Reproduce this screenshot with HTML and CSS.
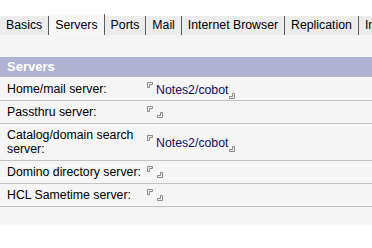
FILE: index.html
```html
<!DOCTYPE html>
<html>
<head>
<meta charset="utf-8">
<link rel="stylesheet" href="styles.css">
</head>
<body>
<div class="tabs">
  <div class="tab">Basics</div>
  <div class="tab tab-active">Servers</div>
  <div class="tab">Ports</div>
  <div class="tab">Mail</div>
  <div class="tab">Internet Browser</div>
  <div class="tab">Replication</div>
  <div class="tab">Internet Protocols</div>
</div>
<div class="panel">
  <div class="section-head">Servers</div>
  <div class="row">
    <div class="label">Home/mail server:</div>
    <div class="value"><span class="field"><svg class="mk mk-open" width="6" height="6" viewBox="0 0 6 6"><polygon points="0.5,5.5 0.5,0.5 5.5,0.5 5.5,2.5 2.5,2.5 2.5,5.5" /></svg><span class="val-text">Notes2/cobot</span><svg class="mk mk-close" width="6" height="6" viewBox="0 0 6 6"><polygon points="5.5,0.5 5.5,5.5 0.5,5.5 0.5,3.5 3.5,3.5 3.5,0.5" /></svg></span></div>
  </div>
  <div class="row">
    <div class="label">Passthru server:</div>
    <div class="value"><span class="field field-empty"><svg class="mk mk-open" width="6" height="6" viewBox="0 0 6 6"><polygon points="0.5,5.5 0.5,0.5 5.5,0.5 5.5,2.5 2.5,2.5 2.5,5.5" /></svg><svg class="mk mk-close" width="6" height="6" viewBox="0 0 6 6"><polygon points="5.5,0.5 5.5,5.5 0.5,5.5 0.5,3.5 3.5,3.5 3.5,0.5" /></svg></span></div>
  </div>
  <div class="row">
    <div class="label">Catalog/domain search server:</div>
    <div class="value"><span class="field"><svg class="mk mk-open" width="6" height="6" viewBox="0 0 6 6"><polygon points="0.5,5.5 0.5,0.5 5.5,0.5 5.5,2.5 2.5,2.5 2.5,5.5" /></svg><span class="val-text">Notes2/cobot</span><svg class="mk mk-close" width="6" height="6" viewBox="0 0 6 6"><polygon points="5.5,0.5 5.5,5.5 0.5,5.5 0.5,3.5 3.5,3.5 3.5,0.5" /></svg></span></div>
  </div>
  <div class="row">
    <div class="label">Domino directory server:</div>
    <div class="value"><span class="field field-empty"><svg class="mk mk-open" width="6" height="6" viewBox="0 0 6 6"><polygon points="0.5,5.5 0.5,0.5 5.5,0.5 5.5,2.5 2.5,2.5 2.5,5.5" /></svg><svg class="mk mk-close" width="6" height="6" viewBox="0 0 6 6"><polygon points="5.5,0.5 5.5,5.5 0.5,5.5 0.5,3.5 3.5,3.5 3.5,0.5" /></svg></span></div>
  </div>
  <div class="row">
    <div class="label">HCL Sametime server:</div>
    <div class="value"><span class="field field-empty"><svg class="mk mk-open" width="6" height="6" viewBox="0 0 6 6"><polygon points="0.5,5.5 0.5,0.5 5.5,0.5 5.5,2.5 2.5,2.5 2.5,5.5" /></svg><svg class="mk mk-close" width="6" height="6" viewBox="0 0 6 6"><polygon points="5.5,0.5 5.5,5.5 0.5,5.5 0.5,3.5 3.5,3.5 3.5,0.5" /></svg></span></div>
  </div>
</div>
</body>
</html>
```
FILE: styles.css
```css
html, body {
  margin: 0;
  padding: 0;
  background: #ffffff;
  overflow: hidden;
}
body {
  font-family: "Liberation Sans", Arial, sans-serif;
  font-size: 12.3px;
  color: #000000;
}
.tabs {
  display: flex;
  align-items: flex-end;
  margin-top: 14px;
  height: 21px;
  white-space: nowrap;
  overflow: hidden;
}
.tab {
  flex: none;
  height: 19px;
  line-height: 19px;
  padding: 0 6px;
  background: #ececec;
  border-right: 1px solid #5a5a5a;
  color: #000000;
}
.tab-active {
  height: 21px;
  line-height: 23px;
  background: #f7f7f7;
}
.panel {
  background: #f5f5f5;
  padding: 22px 0 18px;
}
.section-head {
  height: 20px;
  line-height: 20px;
  padding-left: 7px;
  background: #b1b1d3;
  color: #ffffff;
  font-weight: bold;
  font-size: 13px;
  border-bottom: 1px solid #ffffff;
}
.row {
  display: grid;
  grid-template-columns: 141px 1fr;
  align-items: center;
  border-bottom: 1px solid #c2c2c2;
}
.label {
  padding: 4px 0 4px 7px;
  line-height: 14px;
}
.value {
  padding-left: 6px;
  display: flex;
  align-items: center;
}
.field {
  display: inline-flex;
  align-items: flex-start;
  height: 15px;
}
.field-empty {
  height: 12px;
}
.mk polygon {
  fill: #eeeeee;
  stroke: #8a8a8a;
  stroke-width: 1;
}
.mk {
  flex: none;
  display: block;
}
.mk-close {
  align-self: flex-end;
  margin-bottom: -2px;
}
.field-empty .mk-close {
  margin-left: 4px;
  margin-bottom: 0;
}
.val-text {
  line-height: 15px;
  margin: 1px 1px 0 3px;
  color: #10105a;
}
```
